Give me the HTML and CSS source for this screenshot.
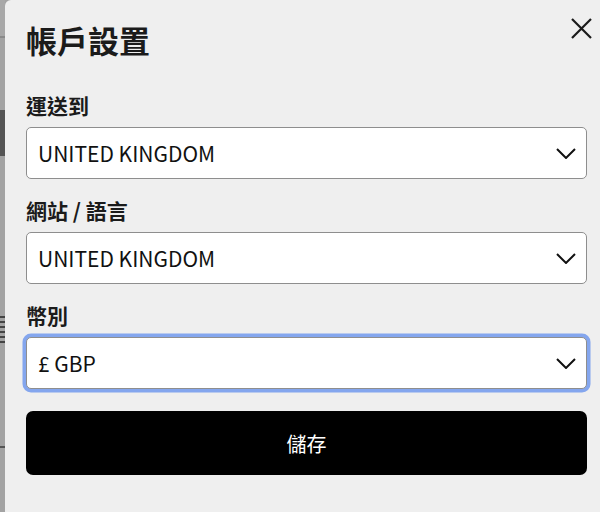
FILE: index.html
```html
<!DOCTYPE html>
<html lang="zh-Hant">
<head>
<meta charset="utf-8">
<title>帳戶設置</title>
<link rel="stylesheet" href="styles.css">
</head>
<body>
<div class="backdrop">
  <div class="strip">
    <div class="s s1"></div>
    <div class="s s2"></div>
    <div class="s s3"></div>
    <div class="s s4"></div>
    <div class="s s5"></div>
    <div class="s s6"></div>
    <div class="s s7"></div>
    <div class="s s8"></div>
  </div>
  <div class="modal">
    <button class="close" aria-label="關閉">
      <svg width="21" height="21" viewBox="0 0 21 21"><path d="M1 1L20 20M20 1L1 20" stroke="#1a1a1a" stroke-width="2.2" fill="none"/></svg>
    </button>
    <h1 class="title">帳戶設置</h1>
    <div class="field">
      <div class="label">運送到</div>
      <div class="select">
        <span class="value">UNITED KINGDOM</span>
        <svg class="chev" width="20" height="11" viewBox="0 0 20 11"><path d="M1 1L10 10L19 1" stroke="#111" stroke-width="2" fill="none"/></svg>
      </div>
    </div>
    <div class="field">
      <div class="label">網站 / 語言</div>
      <div class="select">
        <span class="value">UNITED KINGDOM</span>
        <svg class="chev" width="20" height="11" viewBox="0 0 20 11"><path d="M1 1L10 10L19 1" stroke="#111" stroke-width="2" fill="none"/></svg>
      </div>
    </div>
    <div class="field">
      <div class="label">幣別</div>
      <div class="select focused">
        <span class="value">£ GBP</span>
        <svg class="chev" width="20" height="11" viewBox="0 0 20 11"><path d="M1 1L10 10L19 1" stroke="#111" stroke-width="2" fill="none"/></svg>
      </div>
    </div>
    <button class="save">儲存</button>
  </div>
</div>
</body>
</html>
```

FILE: styles.css
```css
html, body {
  margin: 0;
  padding: 0;
  height: 100%;
}
body {
  background: #a3a3a3;
  font-family: "Noto Sans CJK TC", "Noto Sans", sans-serif;
  overflow: hidden;
}
.backdrop {
  display: flex;
  height: 512px;
}
.strip {
  width: 5px;
  display: flex;
  flex-direction: column;
  background: #a3a3a3;
}
.s1 { height: 36px; background: #a8a8a8; }
.s2 { height: 2px; background: #8a8a8a; }
.s3 { height: 72px; background: #a3a3a3; }
.s4 { height: 46px; background: #555555; }
.s5 { height: 160px; background: #a3a3a3; }
.s6 { height: 30px; background: repeating-linear-gradient(#444 0 2px, #a3a3a3 2px 5px); }
.s7 { height: 100px; background: #a3a3a3; }
.s8 { height: 2px; background: #555; }
.modal {
  position: relative;
  width: 595px;
  box-sizing: border-box;
  background: #efefef;
  border-top-left-radius: 6px;
  padding: 20px 13px 0 21px;
  color: #1b1b1b;
}
.close {
  position: absolute;
  top: 18px;
  right: 8px;
  width: 21px;
  height: 21px;
  padding: 0;
  border: 0;
  background: none;
  display: flex;
}
.title {
  margin: 0 0 31px;
  font-size: 31px;
  line-height: 40px;
  font-weight: 700;
}
.field {
  margin-bottom: 17px;
}
.label {
  font-size: 21px;
  line-height: 28px;
  font-weight: 700;
  margin-bottom: 8px;
}
.select {
  height: 52px;
  box-sizing: border-box;
  background: #fff;
  border: 1px solid #8e8e8e;
  border-radius: 5px;
  display: flex;
  align-items: center;
  justify-content: space-between;
  padding: 0 10px 0 11px;
}
.select.focused {
  box-shadow: 0 0 0 3.5px #84a6ee;
}
.value {
  font-size: 21px;
  line-height: 30px;
  color: #111;
}
.field:last-of-type {
  margin-bottom: 22px;
}
.save {
  display: flex;
  align-items: center;
  justify-content: center;
  width: 100%;
  height: 64px;
  background: #000;
  color: #fff;
  border: 0;
  border-radius: 7px;
  font-family: inherit;
  font-size: 20px;
  padding: 0;
}
```
